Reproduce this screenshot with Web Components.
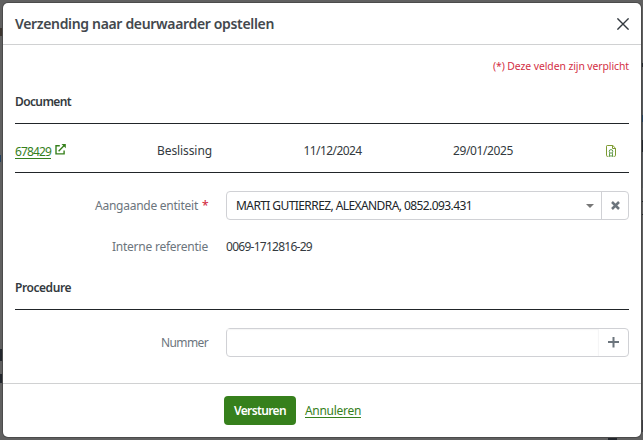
<!DOCTYPE html>
<html lang="nl">
<head>
<meta charset="utf-8">
<title>Verzending naar deurwaarder opstellen</title>
<style>
  body {
    margin: 0;
    height: 440px;
    overflow: hidden;
    background: #606060;
    color: #343a40;
    font: 12px/18px "Noto Sans", "Open Sans", sans-serif;
  }
</style>
</head>
<body>
<page-backdrop></page-backdrop>
<modal-dialog>
  <fit-text slot="title" width="259">Verzending naar deurwaarder opstellen</fit-text>

  <required-note><fit-text width="136">(*) Deze velden zijn verplicht</fit-text></required-note>

  <section-title><fit-text width="56">Document</fit-text></section-title>
  <document-row>
    <fit-text slot="number" width="36">678429</fit-text>
    <fit-text slot="type" width="55">Beslissing</fit-text>
    <fit-text slot="start" width="58">11/12/2024</fit-text>
    <fit-text slot="end" width="60">29/01/2025</fit-text>
  </document-row>

  <form-row required style="margin-top: 18px">
    <fit-text slot="label" width="103">Aangaande entiteit</fit-text>
    <select-box><fit-text width="236">MARTI GUTIERREZ, ALEXANDRA, 0852.093.431</fit-text></select-box>
  </form-row>
  <form-row style="margin-top: 12px">
    <fit-text slot="label" width="96">Interne referentie</fit-text>
    <fit-text width="86">0069-1712816-29</fit-text>
  </form-row>

  <section-title><fit-text width="56">Procedure</fit-text></section-title>
  <form-row style="margin-top: 18px">
    <fit-text slot="label" width="47">Nummer</fit-text>
    <add-input></add-input>
  </form-row>

  <action-button slot="footer"><fit-text width="52">Versturen</fit-text></action-button>
  <action-button slot="footer" link><fit-text width="56">Annuleren</fit-text></action-button>
</modal-dialog>

<script>
class BaseElement extends HTMLElement {
  constructor () {
    super();
    this.attachShadow({ mode: "open" });
  }
  connectedCallback () {
    const template = document.createElement('template');
    template.innerHTML = this.getTemplate();
    this.shadowRoot.replaceChildren(template.content.cloneNode(true));
  }
}

// Single line of text, tracked so it fills the given width
class FitText extends BaseElement {
  getTemplate () {
    return `
      <style>
        :host { display: inline-block; justify-self: start; white-space: nowrap; flex: none; }
      </style>
      <slot></slot>
    `;
  }
  fit () {
    const width = Number(this.getAttribute('width'));
    const natural = this.getBoundingClientRect().width;
    this.style.letterSpacing = (width - natural) / this.textContent.length + 'px';
  }
}

// What is left of the page around the dialog
class PageBackdrop extends BaseElement {
  getTemplate () {
    return `
      <style>
        :host { position: absolute; inset: 0; overflow: hidden; }
        i { position: absolute; background: #23272d; }
      </style>
      <i style="left:0; top:28px; width:2px; height:8px; background:#3c3630"></i>
      <i style="left:0; top:155px; width:1px; height:7px; background:#24405c"></i>
      <i style="left:0; top:349px; width:3px; height:12px"></i>
      <i style="left:0; top:374px; width:2px; height:9px"></i>
      <i style="left:608px; top:437px; width:9px; height:3px"></i>
      <i style="left:641px; top:63px; width:2px; height:4px"></i>
      <i style="left:641px; top:80px; width:2px; height:108px; background:#55585b"></i>
      <i style="left:642px; top:115px; width:1px; height:7px; background:#24405c"></i>
      <i style="left:641px; top:140px; width:2px; height:12px"></i>
      <i style="left:641px; top:201px; width:2px; height:1px"></i>
      <i style="left:641px; top:214px; width:2px; height:1px"></i>
      <i style="left:641px; top:420px; width:2px; height:12px; background:#3a3a40"></i>
    `;
  }
}

class ModalDialog extends BaseElement {
  getTemplate () {
    return `
      <style>
        :host {
          position: relative;
          display: flex;
          flex-direction: column;
          box-sizing: border-box;
          width: 638px;
          height: 434px;
          margin: 3px 0 0 3px;
          background: #fff;
          border-radius: 5px;
          box-shadow: 0 0 0 1px #4b4b4b;
        }
        header {
          display: flex;
          align-items: center;
          justify-content: space-between;
          box-sizing: border-box;
          height: 42px;
          padding: 0 12px;
          border-bottom: 1px solid #d0d1d2;
          font-size: 14px;
          font-weight: 600;
        }
        header ::slotted(*) { color: #43484d; }
        main { flex: 1; padding: 12px 12px 0; }
        footer {
          display: flex;
          align-items: center;
          gap: 9px;
          box-sizing: border-box;
          height: 54px;
          padding-left: 221px;
          border-top: 1px solid #d0d1d2;
        }
      </style>
      <header>
        <slot name="title"></slot>
        <svg width="12" height="12" viewBox="0 0 12 12" fill="none" stroke="#343a40" stroke-width="1.4"><path d="M.4.4l11.2 11.2M11.6.4L.4 11.6"/></svg>
      </header>
      <main><slot></slot></main>
      <footer><slot name="footer"></slot></footer>
    `;
  }
}

class RequiredNote extends BaseElement {
  getTemplate () {
    return `
      <style>
        :host { display: block; height: 18px; text-align: right; color: #d32f45; font-size: 10.4px; }
      </style>
      <slot></slot>
    `;
  }
}

class SectionTitle extends BaseElement {
  getTemplate () {
    return `
      <style>
        :host {
          display: block;
          box-sizing: border-box;
          height: 49px;
          padding-top: 18px;
          border-bottom: 1px solid #212529;
          font-weight: 600;
        }
      </style>
      <slot></slot>
    `;
  }
}

class DocumentRow extends BaseElement {
  getTemplate () {
    return `
      <style>
        :host {
          display: grid;
          grid-template-columns: 142px 146.5px 149.5px 1fr auto;
          align-items: center;
          box-sizing: border-box;
          height: 49px;
          padding: 5px 13px 0 0;
          border-bottom: 1px solid #212529;
        }
        .link { display: flex; align-items: center; gap: 4px; color: #36801c; }
        u { display: flex; padding-top: 2px; border-bottom: 1px solid; line-height: 13px; text-decoration: none; }
        .link svg { margin-bottom: 3px; }
        svg { display: block; }
      </style>
      <div class="link">
        <u><slot name="number"></slot></u>
        <svg width="11" height="11" viewBox="0 0 11 11" fill="none" stroke="currentColor" stroke-width="1.4"><path d="M4.8 1.7H1v8.2h8.1V6.4M3.6 7.2l5.6-5.6"/><path d="M6.5 0h4.3v4.3z" fill="currentColor" stroke="none"/></svg>
      </div>
      <slot name="type"></slot>
      <slot name="start"></slot>
      <slot name="end"></slot>
      <svg width="10" height="12" viewBox="0 0 10 12" fill="none" stroke="#36801c"><path d="M2.5 11.3H1.2a.7.7 0 0 1-.7-.7V1.2c0-.4.3-.7.7-.7h5.6l2.7 2.7v7.4c0 .4-.3.7-.7.7H7.5M6.5.5v3h3" stroke="#7d9a30"/><circle cx="5" cy="6.4" r="1.8" stroke-width=".8"/><path d="M3.5 8.2v3.3L5 10.7l1.5.8V8.2" stroke-width=".8"/></svg>
    `;
  }
}

class FormRow extends BaseElement {
  getTemplate () {
    return `
      <style>
        :host {
          display: grid;
          grid-template-columns: 193px 403px;
          column-gap: 18px;
          align-items: center;
          height: 29px;
        }
        .label { display: flex; justify-content: flex-end; gap: 4px; color: #6c757d; }
        b { width: 6px; color: #d32f45; font-weight: 500; }
      </style>
      <div class="label">
        <slot name="label"></slot>${this.hasAttribute('required') ? '<b>*</b>' : ''}
      </div>
      <slot></slot>
    `;
  }
}

class SelectBox extends BaseElement {
  getTemplate () {
    return `
      <style>
        :host {
          display: flex;
          box-sizing: border-box;
          height: 29px;
          border: 1px solid #d0d1d5;
          border-radius: 4px;
          color: #212529;
        }
        .value { flex: 1; display: flex; align-items: center; justify-content: space-between; padding: 0 7px 0 9px; }
        .clear { width: 26px; display: grid; place-items: center; border-left: 1px solid #d0d1d5; }
      </style>
      <div class="value">
        <slot></slot>
        <svg width="8" height="4" viewBox="0 0 8 4" fill="#777"><path d="M0 0h8L4 4z"/></svg>
      </div>
      <div class="clear">
        <svg width="9" height="9" viewBox="0 0 9 9" stroke="#6c757d" stroke-width="2.5"><path d="M1 1l7 7M8 1L1 8"/></svg>
      </div>
    `;
  }
}

class AddInput extends BaseElement {
  getTemplate () {
    return `
      <style>
        :host {
          display: flex;
          box-sizing: border-box;
          height: 29px;
          border: 1px solid #d0d1d5;
          border-radius: 4px;
        }
        .field { flex: 1; box-shadow: inset 0 1px 1px #f5f5f5; }
        .add { width: 29px; display: grid; place-items: center; border-left: 1px solid #f5f5f6; }
      </style>
      <div class="field"></div>
      <div class="add">
        <svg width="11" height="11" viewBox="0 0 11 11" stroke="#6c757d" stroke-width="2"><path d="M0 5h11M5.5 0v10.5"/></svg>
      </div>
    `;
  }
}

class ActionButton extends BaseElement {
  getTemplate () {
    return `
      <style>
        :host {
          display: flex;
          align-items: center;
          justify-content: center;
          width: 72px;
          height: 29px;
          border-radius: 4px;
          background: #36801c;
          color: #fff;
          font-weight: 600;
        }
        :host([link]) { width: auto; background: none; color: #36801c; font-weight: 400; }
        :host([link]) span { border-bottom: 1px solid; line-height: 13px; }
        span { display: flex; }
      </style>
      <span><slot></slot></span>
    `;
  }
}

customElements.define('page-backdrop', PageBackdrop)
customElements.define('modal-dialog', ModalDialog)
customElements.define('required-note', RequiredNote)
customElements.define('section-title', SectionTitle)
customElements.define('document-row', DocumentRow)
customElements.define('form-row', FormRow)
customElements.define('select-box', SelectBox)
customElements.define('add-input', AddInput)
customElements.define('action-button', ActionButton)
customElements.define('fit-text', FitText)

// needs the inherited fonts, so it runs once everything is upgraded
document.querySelectorAll('fit-text').forEach(el => el.fit());
</script>
</body>
</html>
